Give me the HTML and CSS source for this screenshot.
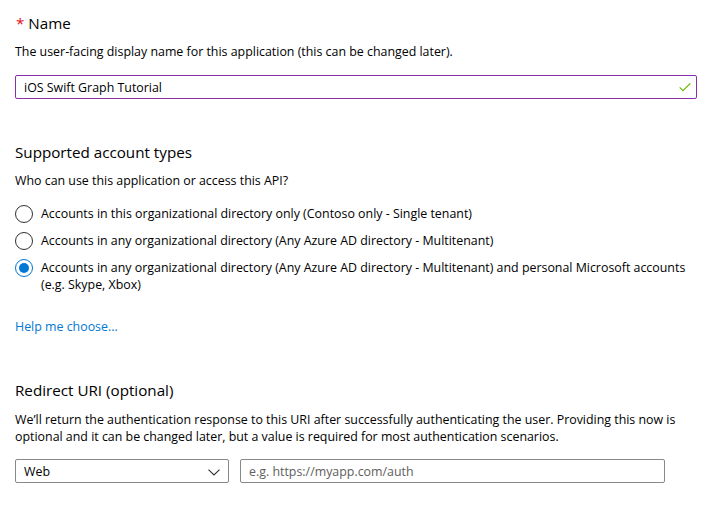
FILE: index.html
```html
<!DOCTYPE html>
<html lang="en">
<head>
<meta charset="utf-8">
<title>Register an application</title>
<link rel="stylesheet" href="styles.css">
</head>
<body>
<div class="page">
  <section class="section">
    <h2 class="heading heading-name"><span class="req">*</span> Name</h2>
    <p class="desc desc-name">The user-facing display name for this application (this can be changed later).</p>
    <div class="textbox textbox-valid">
      <span class="textbox-value">iOS Swift Graph Tutorial</span>
      <svg class="check" width="12" height="9" viewBox="0 0 12 9" aria-hidden="true"><path d="M0.7 4.3 L4 7.6 L11.3 0.4" fill="none" stroke="#6bb700" stroke-width="1.2"/></svg>
    </div>
  </section>

  <section class="section">
    <h2 class="heading heading-accounts">Supported account types</h2>
    <p class="desc desc-accounts">Who can use this application or access this API?</p>
    <div class="radios">
      <label class="radio">
        <span class="radio-dot"></span>
        <span class="radio-text">Accounts in this organizational directory only (Contoso only - Single tenant)</span>
      </label>
      <label class="radio">
        <span class="radio-dot"></span>
        <span class="radio-text">Accounts in any organizational directory (Any Azure AD directory - Multitenant)</span>
      </label>
      <label class="radio radio-checked">
        <span class="radio-dot"></span>
        <span class="radio-text">Accounts in any organizational directory (Any Azure AD directory - Multitenant) and personal Microsoft accounts (e.g. Skype, Xbox)</span>
      </label>
    </div>
    <a class="link" href="#">Help me choose...</a>
  </section>

  <section class="section">
    <h2 class="heading heading-redirect">Redirect URI (optional)</h2>
    <p class="desc desc-redirect">We’ll return the authentication response to this URI after successfully authenticating the user. Providing this now is optional and it can be changed later, but a value is required for most authentication scenarios.</p>
    <div class="redirect-row">
      <div class="select">
        <span class="select-value">Web</span>
        <svg class="chevron" width="12" height="7" viewBox="0 0 12 7" aria-hidden="true"><path d="M0.5 0.6 L6 6 L11.5 0.6" fill="none" stroke="#323130" stroke-width="1.1"/></svg>
      </div>
      <div class="textbox textbox-uri">
        <span class="placeholder">e.g. https://myapp.com/auth</span>
      </div>
    </div>
  </section>
</div>
</body>
</html>
```

FILE: styles.css
```css
* { box-sizing: border-box; }

html, body {
  margin: 0;
  padding: 0;
  background: #ffffff;
}

body {
  font-family: "Segoe UI", "Open Sans", "Noto Sans", sans-serif;
  color: #000000;
  font-size: 12.4px;
}

.page {
  padding: 0 11px 0 15px;
}

.section {
  display: flex;
  flex-direction: column;
  align-items: flex-start;
}

.heading {
  margin: 0;
  font-size: 15.2px;
  font-weight: 400;
  line-height: 22px;
  color: #000;
}

.heading-name { margin-top: 12px; }
.heading-accounts { margin-top: 42px; }
.heading-redirect { margin-top: 43px; }

.req {
  color: #e00b1c;
  margin-left: 1px;
}

.desc {
  margin: 0;
  font-size: 12.4px;
  line-height: 18px;
}

.desc-name { margin-top: 9px; }
.desc-accounts { margin-top: 9px; }
.desc-redirect {
  margin-top: 10px;
  line-height: 17px;
}

.textbox {
  display: flex;
  align-items: center;
  height: 24px;
  border: 1px solid #8a8886;
  border-radius: 2px;
  padding: 0 8px;
  font-size: 12.4px;
}

.textbox-valid {
  margin-top: 14px;
  width: 682px;
  border-color: #8c2ea8;
  justify-content: space-between;
  padding-right: 5px;
}

.check {
  display: block;
}

.radios {
  margin-top: 15px;
  display: flex;
  flex-direction: column;
  gap: 9px;
}

.radio {
  display: flex;
  align-items: flex-start;
  gap: 8px;
  line-height: 17px;
}

.radio-dot {
  flex: 0 0 auto;
  width: 18px;
  height: 18px;
  border: 1px solid #323130;
  border-radius: 50%;
  display: flex;
  align-items: center;
  justify-content: center;
}

.radio-checked .radio-dot {
  border-color: #0078d4;
}

.radio-checked .radio-dot::after {
  content: "";
  width: 10px;
  height: 10px;
  border-radius: 50%;
  background: #0078d4;
}

.radio-text {
  max-width: 650px;
}

.link {
  margin-top: 25px;
  color: #0078d4;
  text-decoration: none;
  line-height: 18px;
}

.redirect-row {
  margin-top: 14px;
  display: flex;
  gap: 11px;
}

.select {
  width: 214px;
  height: 24px;
  border: 1px solid #8a8886;
  border-radius: 2px;
  display: flex;
  align-items: center;
  justify-content: space-between;
  padding: 0 8px 0 8px;
}

.chevron { display: block; margin-top: 2px; }

.textbox-uri {
  width: 425px;
}

.placeholder {
  color: #605e5c;
}
```
